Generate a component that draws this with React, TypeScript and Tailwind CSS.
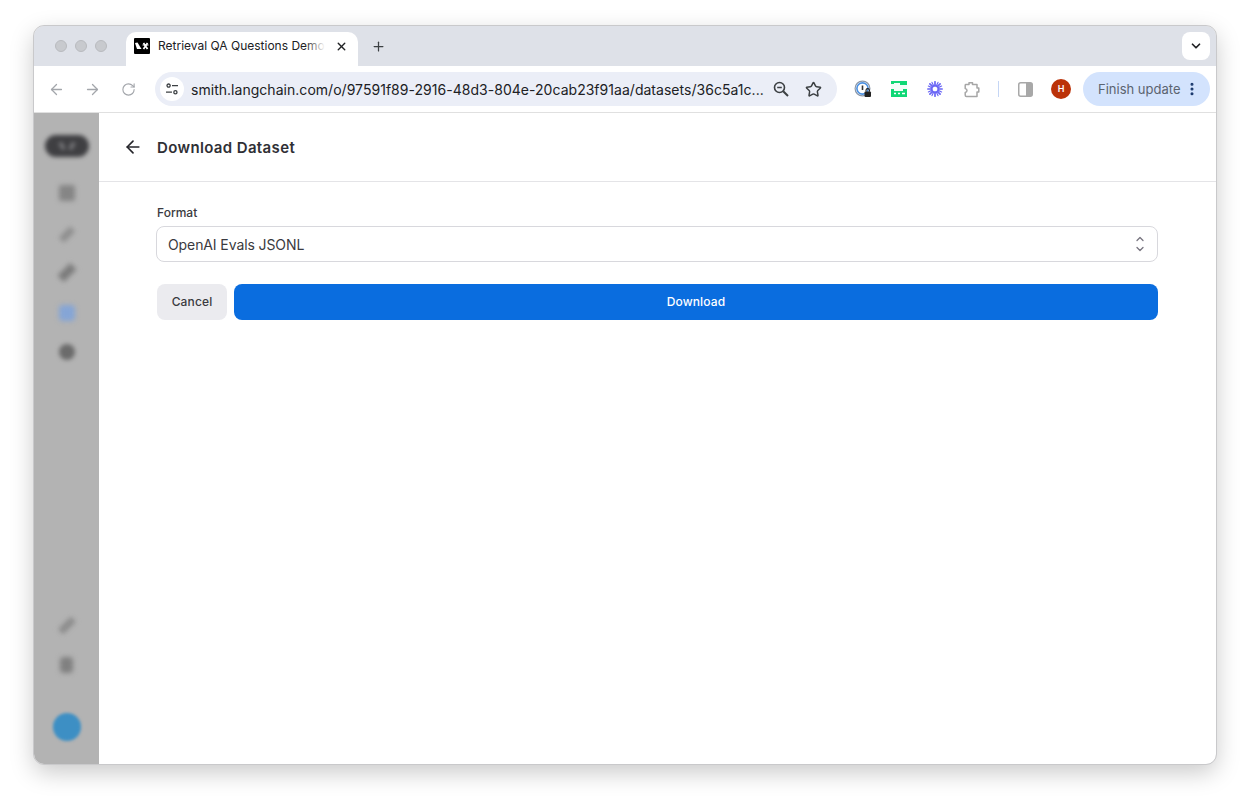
import { ArrowLeft, ArrowRight, ChevronDown, EllipsisVertical, Plus, RotateCw, Star, X } from 'lucide-react';

const font = { fontFamily: 'Inter, "Liberation Sans", sans-serif' };

function TabFavicon() {
  return (
    <svg width="16" height="16" viewBox="0 0 16 16" className="shrink-0">
      <rect width="16" height="16" rx="1" fill="#000" />
      <path d="M1 5 L3.5 4.5 L7.5 11 L3 11 Z" fill="#fff" />
      <path d="M9.5 5 L13.5 11 M13.5 5 L9.5 11" stroke="#fff" strokeWidth="1.7" />
      <path d="M8.5 7 H14.5" stroke="#fff" strokeWidth="1" />
    </svg>
  );
}

function SiteSettingsIcon() {
  return (
    <svg width="14" height="14" viewBox="0 0 14 14" fill="none" stroke="#3c4043" strokeWidth="1.3">
      <circle cx="3.6" cy="3.6" r="1.6" />
      <path d="M7 3.6 H13" />
      <circle cx="10.4" cy="10.2" r="1.6" />
      <path d="M1 10.2 H7" />
    </svg>
  );
}

function ZoomOutIcon() {
  return (
    <svg width="18" height="18" viewBox="0 0 18 18" fill="none" stroke="#3c4043" strokeWidth="1.6">
      <circle cx="7.5" cy="7.5" r="5" />
      <path d="M11.2 11.2 L16 16" strokeWidth="2" />
      <path d="M5.2 7.5 H9.8" />
    </svg>
  );
}

function OnePasswordIcon() {
  return (
    <svg width="18" height="18" viewBox="0 0 18 18" fill="none">
      <circle cx="8.5" cy="8.5" r="7.4" stroke="#8b97a8" strokeWidth="1.2" />
      <circle cx="8.5" cy="8.5" r="5.6" stroke="#4a90e2" strokeWidth="1.6" />
      <path d="M8.5 5.5 V10" stroke="#333" strokeWidth="1.6" />
      <rect x="10.5" y="11.5" width="6.5" height="5.5" rx="1" fill="#222" />
      <path d="M12 11.5 V10.3 a1.7 1.7 0 0 1 3.4 0 V11.5" stroke="#222" strokeWidth="1.1" />
    </svg>
  );
}

function GreenExtensionIcon() {
  return (
    <svg width="16" height="16" viewBox="0 0 16 16" className="shrink-0">
      <rect width="16" height="16" fill="#10d876" />
      <path d="M0 3 H3 V2 H9 V4 H16 V8 H12 V10 H3 V8 H0 Z" fill="#fff" opacity="0.95" />
      <path d="M3 12.5 H5 M7 12.5 H9 M11 12.5 H14" stroke="#fff" strokeWidth="1.4" />
    </svg>
  );
}

function BurstIcon() {
  return (
    <svg width="16" height="16" viewBox="0 0 16 16" fill="none" stroke="#6a66f5" strokeWidth="1.7" strokeLinecap="round">
      <path d="M8 0.8 V4.8 M8 11.2 V15.2 M0.8 8 H4.8 M11.2 8 H15.2 M2.9 2.9 L5.7 5.7 M10.3 10.3 L13.1 13.1 M13.1 2.9 L10.3 5.7 M5.7 10.3 L2.9 13.1" />
      <path d="M5 1.4 L6.6 4.8 M11 1.4 L9.4 4.8 M5 14.6 L6.6 11.2 M11 14.6 L9.4 11.2 M1.4 5 L4.8 6.6 M1.4 11 L4.8 9.4 M14.6 5 L11.2 6.6 M14.6 11 L11.2 9.4" strokeWidth="1.2" />
      <circle cx="8" cy="8" r="3.4" strokeWidth="1.8" />
    </svg>
  );
}

function PuzzleIcon() {
  return (
    <svg width="17" height="17" viewBox="0 0 17 17" fill="none" stroke="#a6a6a6" strokeWidth="1.5" strokeLinejoin="round">
      <path d="M2.5 3.5 H6 V1.8 H9.5 V3.5 H14 V7 H15.8 V11 H14 V15.5 H3.5 Q2.2 15.5 2.2 14 V11.5 Q4 11.2 4 9.5 Q4 7.8 2.2 7.5 V4.5 Q2.2 3.5 2.5 3.5 Z" />
    </svg>
  );
}

function SidePanelIcon() {
  return (
    <svg width="15" height="15" viewBox="0 0 15 15">
      <rect x="0.75" y="0.75" width="13.5" height="13.5" rx="2" fill="#fff" stroke="#a8a8a8" strokeWidth="1.5" />
      <rect x="8" y="1" width="6" height="13" fill="#a8a8a8" />
    </svg>
  );
}

function UpDownIcon() {
  return (
    <svg width="10" height="16" viewBox="0 0 10 16" fill="none" stroke="#77747f" strokeWidth="1.3" strokeLinecap="round" strokeLinejoin="round">
      <path d="M2 4.5 L5 1.5 L8 4.5" />
      <path d="M2 11.5 L5 14.5 L8 11.5" />
    </svg>
  );
}

function BrowserTabs() {
  return (
    <div className="h-10 shrink-0 bg-[#dee1e8] flex items-end pl-[21px] pr-[6px]">
      <div className="flex items-center gap-2 h-10 w-[71px]">
        <span className="w-3 h-3 rounded-full bg-[#c8cace] border border-[#b9bbbf]" />
        <span className="w-3 h-3 rounded-full bg-[#c8cace] border border-[#b9bbbf]" />
        <span className="w-3 h-3 rounded-full bg-[#c8cace] border border-[#b9bbbf]" />
      </div>
      <div className="w-[232px] h-[34px] bg-white rounded-t-[10px] flex items-center pl-[8px] pr-[10px] pb-[6px]">
        <TabFavicon />
        <div className="relative ml-2 w-[167px] overflow-hidden">
          <span className="block text-[12px] text-[#202124] whitespace-nowrap">Retrieval QA Questions Demo</span>
          <span className="absolute right-0 top-0 bottom-0 w-5 bg-gradient-to-r from-transparent to-white" />
        </div>
        <X size={13} strokeWidth={2.6} className="ml-auto text-[#202124]" />
      </div>
      <div className="h-10 w-7 ml-[6px] flex items-center justify-center">
        <Plus size={15} strokeWidth={2} className="text-[#3c4043]" />
      </div>
      <div className="ml-auto h-10 flex items-center">
        <div className="w-7 h-7 bg-white rounded-lg flex items-center justify-center">
          <ChevronDown size={14} strokeWidth={3} className="text-[#202124]" />
        </div>
      </div>
    </div>
  );
}

function BrowserToolbar() {
  return (
    <div className="h-[47px] shrink-0 bg-white border-b border-[#e0e0e0] rounded-t-lg flex items-center pl-[14px] pr-[6px]">
      <ArrowLeft size={17} strokeWidth={1.8} className="text-[#a3a6ab]" />
      <ArrowRight size={17} strokeWidth={1.8} className="text-[#a3a6ab] ml-[19px]" />
      <RotateCw size={15} strokeWidth={1.8} className="text-[#a3a6ab] ml-[20px]" />
      <div className="ml-[19px] w-[682px] h-[34px] rounded-full bg-[#ebeef7] flex items-center pl-[5px] pr-[15px]">
        <div className="w-6 h-6 bg-white rounded-full flex items-center justify-center">
          <SiteSettingsIcon />
        </div>
        <span className="ml-[7px] text-[14px] text-[#202124] whitespace-nowrap tracking-[0.03px]">
          smith.langchain.com/o/97591f89-2916-48d3-804e-20cab23f91aa/datasets/36c5a1c...
        </span>
        <span className="ml-auto flex items-center gap-[15px]">
          <ZoomOutIcon />
          <Star size={17} strokeWidth={2.1} className="text-[#3c4043]" />
        </span>
      </div>
      <div className="ml-[17px] flex items-center">
        <span className="w-[18px] flex justify-center"><OnePasswordIcon /></span>
        <span className="w-[18px] ml-[18px] flex justify-center"><GreenExtensionIcon /></span>
        <span className="w-[18px] ml-[18px] flex justify-center"><BurstIcon /></span>
        <span className="w-[18px] ml-[18px] flex justify-center"><PuzzleIcon /></span>
        <span className="w-px h-4 bg-[#c5d6f5] ml-[18px]" />
        <span className="ml-[19px] flex"><SidePanelIcon /></span>
        <span className="ml-[18px] w-5 h-5 rounded-full bg-[#bb3209] text-white text-[9px] font-semibold flex items-center justify-center">H</span>
      </div>
      <div className="ml-[12px] w-[127px] h-[34px] rounded-full bg-[#d3e3fd] flex items-center pl-[15px]">
        <span className="text-[13px] text-[#5b6470] whitespace-nowrap pt-px">Finish update</span>
        <EllipsisVertical size={16} strokeWidth={2.6} className="text-[#1c3a6e] ml-[4px]" />
      </div>
    </div>
  );
}

function Sidebar() {
  return (
    <div className="w-[65px] shrink-0 bg-[#b3b3b3] rounded-bl-lg flex flex-col items-center pt-[22px] pb-[23px]">
      <div className="w-[44px] h-[22px] rounded-full bg-[#3f3f42] blur-[2px] flex items-center justify-center gap-[6px]">
        <span className="w-[4px] h-[8px] bg-[#77777a] rotate-[-30deg]" />
        <span className="w-[4px] h-[8px] bg-[#77777a] rotate-[30deg]" />
      </div>
      <div className="w-[16px] h-[16px] rounded-[3px] bg-[#858585] blur-[2.5px] mt-[28px]" />
      <div className="w-[16px] h-[7px] bg-[#8d8d8d] -rotate-45 blur-[2.5px] mt-[30px]" />
      <div className="w-[18px] h-[9px] bg-[#7c7c7c] -rotate-45 blur-[2.5px] mt-[30px]" />
      <div className="w-[16px] h-[16px] rounded-[4px] bg-[#85a5d6] blur-[2.5px] mt-[28px]" />
      <div className="w-[16px] h-[16px] rounded-full bg-[#6b6b6b] blur-[2px] mt-[23px]" />
      <div className="w-[18px] h-[7px] bg-[#8a8a8a] -rotate-45 blur-[2.5px] mt-auto" />
      <div className="w-[13px] h-[16px] rounded-[4px] bg-[#808080] blur-[2.5px] mt-[28px]" />
      <div className="w-[28px] h-[28px] rounded-full bg-[#3d8fc4] blur-[1.5px] mt-[40px]" />
    </div>
  );
}

function DownloadForm() {
  return (
    <div className="flex-1 min-w-0 bg-white rounded-br-lg flex flex-col">
      <div className="h-[69px] shrink-0 border-b border-[#e4e4e7] flex items-center pl-[24px]">
        <ArrowLeft size={20} strokeWidth={2} className="text-[#26262b]" />
        <h1 className="ml-[14px] text-[15px] font-semibold text-[#2f2f35] tracking-[0.36px] pt-[3px]">Download Dataset</h1>
      </div>
      <div className="pl-[57px] pr-[58px] pt-[24px]">
        <label className="block ml-px text-[12px] font-medium text-[#3a3a40] leading-[14px]">Format</label>
        <div className="mt-[6px] h-9 border border-[#d8d8dd] rounded-lg flex items-center pl-[11px] pr-[12px]">
          <span className="text-[14px] text-[#3a3a40] tracking-[-0.1px]">OpenAI Evals JSONL</span>
          <span className="ml-auto flex"><UpDownIcon /></span>
        </div>
        <div className="mt-[22px] flex gap-[7px]">
          <button className="ml-px w-[70px] h-9 rounded-lg bg-[#ebebef] text-[12px] font-medium text-[#3a3a40] tracking-[0.15px]">Cancel</button>
          <button className="flex-1 h-9 rounded-lg bg-[#0a6ddf] text-[12px] font-medium text-white tracking-[0.15px]">Download</button>
        </div>
      </div>
    </div>
  );
}

export default function App() {
  return (
    <div className="w-[1250px] h-[806px] bg-white pt-[26px] pl-[34px] overflow-hidden" style={font}>
      <div className="w-[1182px] h-[738px] rounded-[10px] flex flex-col overflow-hidden shadow-[0_8px_24px_rgba(0,0,0,0.22)] outline outline-[#c9c9cb]">
        <BrowserTabs />
        <BrowserToolbar />
        <div className="flex-1 min-h-0 flex">
          <Sidebar />
          <DownloadForm />
        </div>
      </div>
    </div>
  );
}
